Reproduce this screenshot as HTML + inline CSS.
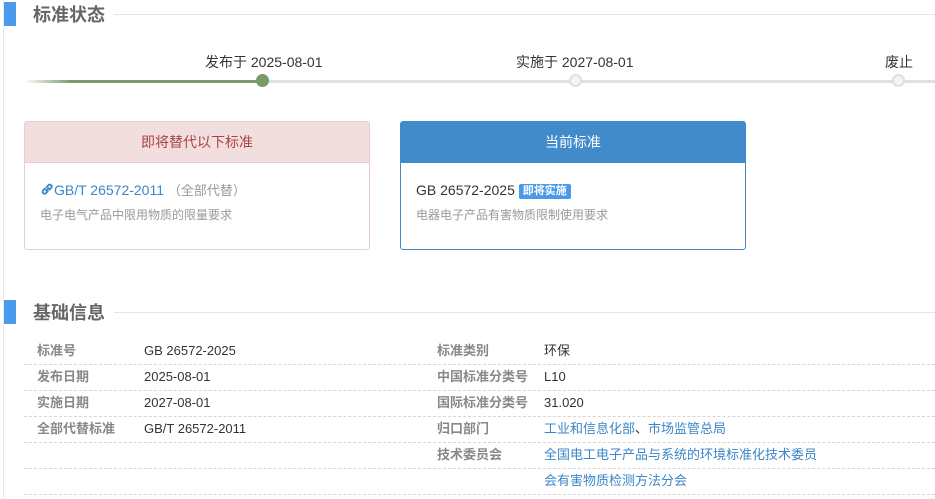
<!DOCTYPE html>
<html><head><meta charset="utf-8"><style>
*{margin:0;padding:0;box-sizing:border-box}
body{width:935px;height:499px;overflow:hidden;background:#fff;font-family:"Liberation Sans","Noto Sans CJK SC",sans-serif;position:relative;color:#333}
.a{position:absolute;white-space:nowrap}
.bar{position:absolute;left:4px;width:12px;background:#4a9af0}
.h{font-size:18px;font-weight:bold;color:#666;line-height:24px}
.hl{position:absolute;height:1px;background:#e6e6e6}
.dot{position:absolute;width:13px;height:13px;border-radius:50%}
.row{position:absolute;left:24px;right:0;height:26px;border-bottom:1px dashed #d6d6d6;font-size:13px}
.row span{position:absolute;top:0;line-height:24px;white-space:nowrap}
.l{color:#888;font-weight:bold}
.lk{color:#3b86c8}
</style></head><body>
<div class="a" style="left:3px;top:0;width:1px;height:499px;background:#e8e8e8"></div>
<div class="bar" style="top:2px;height:24px"></div>
<div class="a h" style="left:33px;top:3px">标准状态</div>
<div class="hl" style="left:114px;right:0;top:14px"></div>

<div class="a" style="left:24px;top:80px;width:240px;height:3px;background:linear-gradient(90deg,#fff,#7a9a6a 20%,#7a9a6a)"></div>
<div class="a" style="left:264px;right:0;top:80px;height:3px;background:#e0e0e0"></div>
<div class="dot" style="left:256px;top:74px;background:#7a9a6a"></div>
<div class="dot" style="left:569px;top:74px;background:#f4f4f4;border:2px solid #e0e0e0"></div>
<div class="dot" style="left:892px;top:74px;background:#f4f4f4;border:2px solid #e0e0e0"></div>
<div class="a" style="left:205px;top:52px;font-size:14px;line-height:20px">发布于 2025-08-01</div>
<div class="a" style="left:516px;top:52px;font-size:14px;line-height:20px">实施于 2027-08-01</div>
<div class="a" style="left:885px;top:52px;font-size:14px;line-height:20px">废止</div>

<div class="a" style="left:24px;top:121px;width:346px;height:129px;border:1px solid #ebcccc;border-radius:3px;overflow:hidden">
<div style="height:41px;background:#f2dede;border-bottom:1px solid #ebcccc;color:#a94442;font-size:14px;text-align:center;line-height:40px">即将替代以下标准</div>
<div class="a" style="left:15px;top:58px;font-size:14px;line-height:20px;color:#3b86c8"><svg width="14" height="14" viewBox="0 0 14 14" style="vertical-align:-1px"><path d="M6 8.5 L8.5 6 M5 6.5 L3 8.5 a2 2 0 0 0 2.8 2.8 L7.8 9.3 M6.5 5 L8.5 3 a2 2 0 0 1 2.8 2.8 L9.3 7.8" fill="none" stroke="#3b86c8" stroke-width="1.8" stroke-linecap="round"/></svg>GB/T 26572-2011 <span style="color:#999;font-size:13px">（全部代替）</span></div>
<div class="a" style="left:15px;top:84px;font-size:12px;line-height:18px;color:#999">电子电气产品中限用物质的限量要求</div>
</div>

<div class="a" style="left:400px;top:121px;width:346px;height:129px;border:1px solid #428bca;border-radius:3px;overflow:hidden">
<div style="height:41px;background:#428bca;color:#fff;font-size:14px;text-align:center;line-height:40px">当前标准</div>
<div class="a" style="left:15px;top:58px;font-size:14px;line-height:20px;color:#333">GB 26572-2025 <span style="display:inline-block;background:#4a9ae8;color:#fff;font-size:11px;line-height:15px;font-weight:bold;padding:0 4px;border-radius:2px;vertical-align:1px">即将实施</span></div>
<div class="a" style="left:15px;top:84px;font-size:12px;line-height:18px;color:#999">电器电子产品有害物质限制使用要求</div>
</div>

<div class="bar" style="top:300px;height:24px"></div>
<div class="a h" style="left:33px;top:301px">基础信息</div>
<div class="hl" style="left:114px;right:0;top:312px"></div>

<div class="row" style="top:339px"><span class="l" style="left:13px">标准号</span><span style="left:120px">GB 26572-2025</span><span class="l" style="left:413px">标准类别</span><span style="left:520px">环保</span></div>
<div class="row" style="top:365px"><span class="l" style="left:13px">发布日期</span><span style="left:120px">2025-08-01</span><span class="l" style="left:413px">中国标准分类号</span><span style="left:520px">L10</span></div>
<div class="row" style="top:391px"><span class="l" style="left:13px">实施日期</span><span style="left:120px">2027-08-01</span><span class="l" style="left:413px">国际标准分类号</span><span style="left:520px">31.020</span></div>
<div class="row" style="top:417px"><span class="l" style="left:13px">全部代替标准</span><span style="left:120px">GB/T 26572-2011</span><span class="l" style="left:413px">归口部门</span><span class="lk" style="left:520px">工业和信息化部<span style="position:static;color:#333">、</span>市场监管总局</span></div>
<div class="row" style="top:443px"><span class="l" style="left:413px">技术委员会</span><span class="lk" style="left:520px">全国电工电子产品与系统的环境标准化技术委员</span></div>
<div class="row" style="top:469px"><span class="lk" style="left:520px">会有害物质检测方法分会</span></div>
</body></html>
